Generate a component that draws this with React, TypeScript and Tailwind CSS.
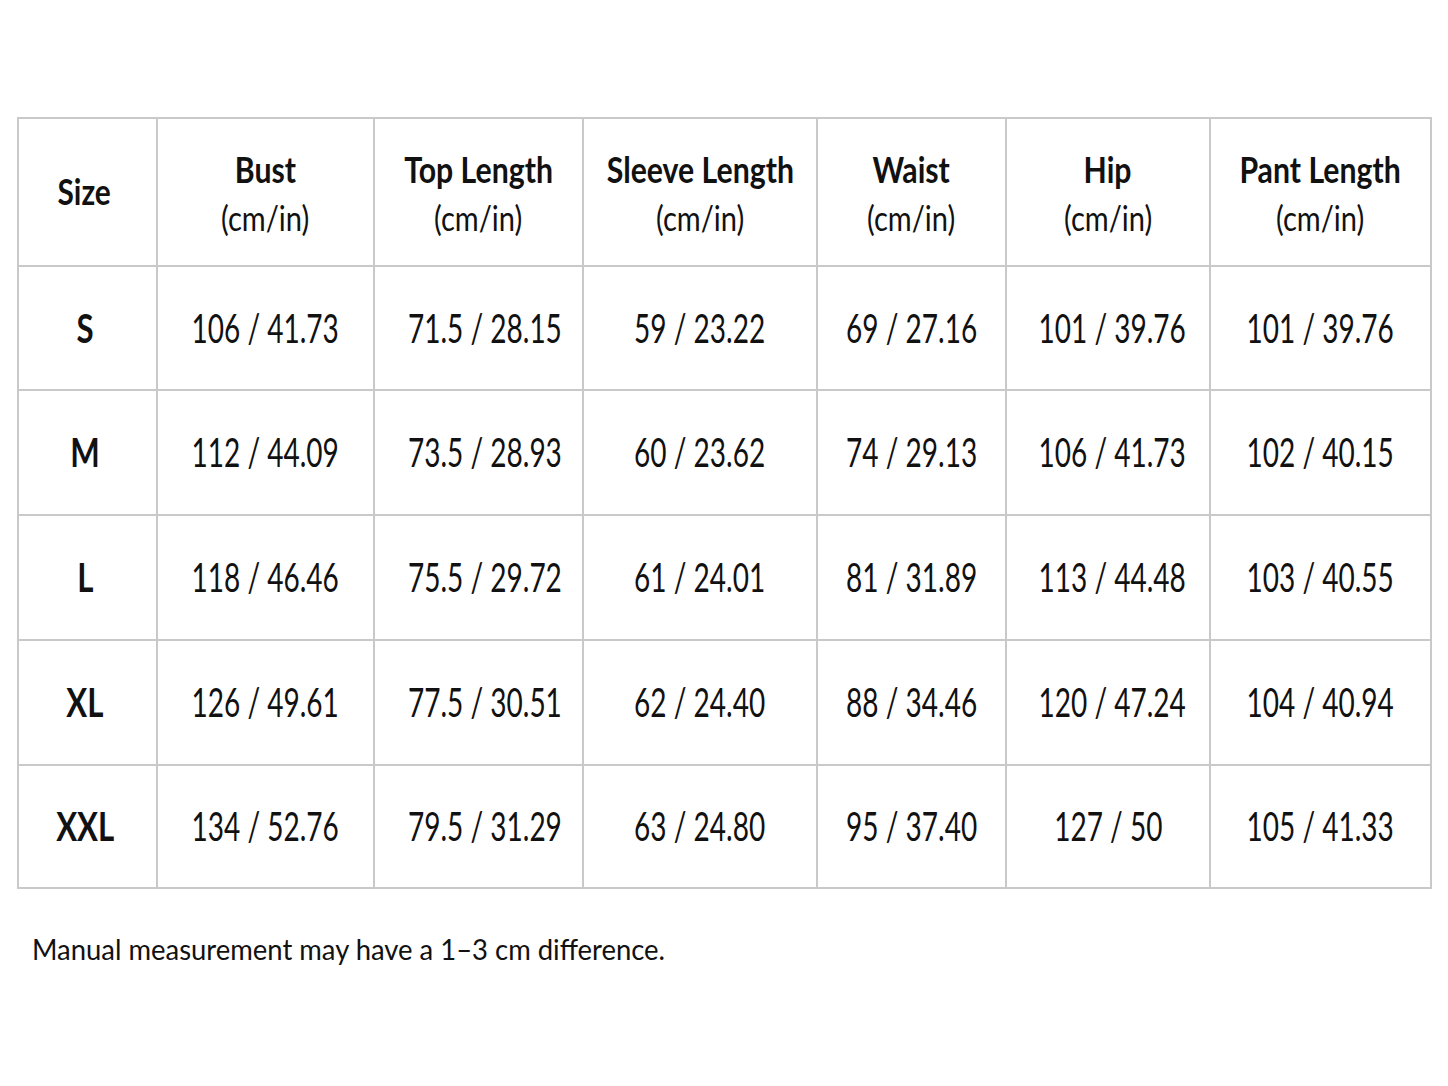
import React from 'react';

const columns = [
  { title: 'Size', width: 139 },
  { title: 'Bust', width: 217 },
  { title: 'Top Length', width: 209 },
  { title: 'Sleeve Length', width: 234 },
  { title: 'Waist', width: 189 },
  { title: 'Hip', width: 204 },
  { title: 'Pant Length', width: 221 },
];

const rows = [
  ['S', '106 / 41.73', '71.5 / 28.15', '59 / 23.22', '69 / 27.16', '101 / 39.76', '101 / 39.76'],
  ['M', '112 / 44.09', '73.5 / 28.93', '60 / 23.62', '74 / 29.13', '106 / 41.73', '102 / 40.15'],
  ['L', '118 / 46.46', '75.5 / 29.72', '61 / 24.01', '81 / 31.89', '113 / 44.48', '103 / 40.55'],
  ['XL', '126 / 49.61', '77.5 / 30.51', '62 / 24.40', '88 / 34.46', '120 / 47.24', '104 / 40.94'],
  ['XXL', '134 / 52.76', '79.5 / 31.29', '63 / 24.80', '95 / 37.40', '127 / 50', '105 / 41.33'],
];

const rowHeights = [124, 125, 125, 125, 123];

export default function App() {
  return (
    <div
      className="w-[1448px] h-[1086px] bg-white text-[#111] overflow-hidden"
      style={{ fontFamily: 'Lato, "Open Sans", sans-serif' }}
    >
      <div className="pt-[117px] pl-[17px]">
        <table className="w-[1413px] border-collapse table-fixed">
          <colgroup>
            {columns.map((c) => (
              <col key={c.title} style={{ width: c.width }} />
            ))}
          </colgroup>
          <thead>
            <tr className="h-[148px]">
              {columns.map((c, i) => (
                <th
                  key={c.title}
                  className={
                    i === 0
                      ? 'border-2 border-[#c9c9c9] text-center align-middle p-0 pr-[6px]'
                      : 'border-2 border-[#c9c9c9] text-center align-middle p-0'
                  }
                >
                  {i === 0 ? (
                    <span className="inline-block scale-x-[0.83] text-[36px] font-bold leading-none">
                      {c.title}
                    </span>
                  ) : (
                    <div className="flex flex-col items-center gap-[8px] pt-[2px]">
                      <span className="inline-block scale-x-[0.84] text-[36px] font-bold leading-[40px] whitespace-nowrap">
                        {c.title}
                      </span>
                      <span className="inline-block scale-x-[0.83] text-[35px] font-normal leading-[40px] whitespace-nowrap">
                        (cm/in)
                      </span>
                    </div>
                  )}
                </th>
              ))}
            </tr>
          </thead>
          <tbody>
            {rows.map((r, ri) => (
              <tr key={r[0]} style={{ height: rowHeights[ri] }}>
                {r.map((cell, ci) => (
                  <td
                    key={ci}
                    className={
                      ci === 0
                        ? 'border-2 border-[#c9c9c9] text-center align-middle p-0 pr-[5px]'
                        : 'border-2 border-[#c9c9c9] text-center align-middle p-0'
                    }
                  >
                    <span
                      className={
                        ci === 0
                          ? 'inline-block scale-x-[0.78] text-[40px] font-bold leading-none'
                          : 'inline-block scale-x-[0.7] text-[40px] font-normal leading-none whitespace-nowrap'
                      }
                    >
                      {cell}
                    </span>
                  </td>
                ))}
              </tr>
            ))}
          </tbody>
        </table>
        <p className="mt-[46px] ml-[15px] origin-left scale-x-[0.98] text-[28px] leading-none whitespace-nowrap">
          Manual measurement may have a 1–3 cm difference.
        </p>
      </div>
    </div>
  );
}
